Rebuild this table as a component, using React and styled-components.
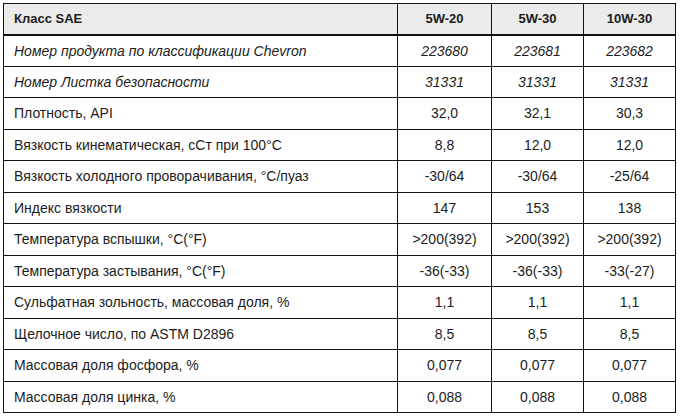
import React from "react";
import styled, { createGlobalStyle } from "styled-components";

const Global = createGlobalStyle`
  html, body { margin: 0; padding: 0; background: #fff; }
  body { font-family: "Liberation Sans", Arial, sans-serif; color: #1c1c1c; }
`;

const Page = styled.div`
  padding: 3px 0 0 3px;
`;

const Table = styled.table`
  border-collapse: collapse;
  table-layout: fixed;
  width: 672px;
  font-size: 14px;
`;

const HeadRow = styled.tr`
  background: #ebebeb;
  height: 31px;
`;

const Row = styled.tr`
  height: 31.5px;
`;

const HeadCell = styled.th`
  border: 1px solid #111;
  border-bottom: 2px solid #111;
  font-weight: bold;
  font-size: 13px;
  text-align: ${(p) => (p.$left ? "left" : "center")};
  padding: 0 0 0 ${(p) => (p.$left ? "10px" : "0")};
  vertical-align: middle;
`;

const Cell = styled.td`
  border: 1px solid #111;
  text-align: ${(p) => (p.$left ? "left" : "center")};
  font-style: ${(p) => (p.$italic ? "italic" : "normal")};
  padding: 0 0 0 ${(p) => (p.$left ? "10px" : "0")};
  vertical-align: middle;
  white-space: nowrap;
`;

const rows = [
  ["Номер продукта по классификации Chevron", "223680", "223681", "223682", true],
  ["Номер Листка безопасности", "31331", "31331", "31331", true],
  ["Плотность, API", "32,0", "32,1", "30,3"],
  ["Вязкость кинематическая, сСт при 100°C", "8,8", "12,0", "12,0"],
  ["Вязкость холодного проворачивания, °C/пуаз", "-30/64", "-30/64", "-25/64"],
  ["Индекс вязкости", "147", "153", "138"],
  ["Температура вспышки, °C(°F)", ">200(392)", ">200(392)", ">200(392)"],
  ["Температура застывания, °C(°F)", "-36(-33)", "-36(-33)", "-33(-27)"],
  ["Сульфатная зольность, массовая доля, %", "1,1", "1,1", "1,1"],
  ["Щелочное число, по ASTM D2896", "8,5", "8,5", "8,5"],
  ["Массовая доля фосфора, %", "0,077", "0,077", "0,077"],
  ["Массовая доля цинка, %", "0,088", "0,088", "0,088"],
];

export default function App() {
  return (
    <Page>
      <Global />
      <Table>
        <colgroup>
          <col style={{ width: 394 }} />
          <col style={{ width: 94 }} />
          <col style={{ width: 92 }} />
          <col style={{ width: 92 }} />
        </colgroup>
        <thead>
          <HeadRow>
            <HeadCell $left>Класс SAE</HeadCell>
            <HeadCell>5W-20</HeadCell>
            <HeadCell>5W-30</HeadCell>
            <HeadCell>10W-30</HeadCell>
          </HeadRow>
        </thead>
        <tbody>
          {rows.map(([label, a, b, c, it]) => (
            <Row key={label}>
              <Cell $left $italic={it}>{label}</Cell>
              <Cell $italic={it}>{a}</Cell>
              <Cell $italic={it}>{b}</Cell>
              <Cell $italic={it}>{c}</Cell>
            </Row>
          ))}
        </tbody>
      </Table>
    </Page>
  );
}
